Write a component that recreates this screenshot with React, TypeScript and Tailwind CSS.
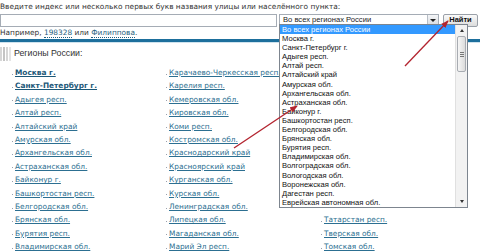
const col1 = [
  "Москва г.",
  "Санкт-Петербург г.",
  "Адыгея респ.",
  "Алтай респ.",
  "Алтайский край",
  "Амурская обл.",
  "Архангельская обл.",
  "Астраханская обл.",
  "Байконур г.",
  "Башкортостан респ.",
  "Белгородская обл.",
  "Брянская обл.",
  "Бурятия респ.",
  "Владимирская обл.",
];

const col2 = [
  "Карачаево-Черкесская респ.",
  "Карелия респ.",
  "Кемеровская обл.",
  "Кировская обл.",
  "Коми респ.",
  "Костромская обл.",
  "Краснодарский край",
  "Красноярский край",
  "Курганская обл.",
  "Курская обл.",
  "Ленинградская обл.",
  "Липецкая обл.",
  "Магаданская обл.",
  "Марий Эл респ.",
];

// rows above these are hidden under the open dropdown
const col3 = [
  "", "", "", "", "", "", "", "", "", "", "",
  "Татарстан респ.",
  "Тверская обл.",
  "Томская обл.",
];

const options = [
  "Во всех регионах России",
  "Москва г.",
  "Санкт-Петербург г.",
  "Адыгея респ.",
  "Алтай респ.",
  "Алтайский край",
  "Амурская обл.",
  "Архангельская обл.",
  "Астраханская обл.",
  "Байконур г.",
  "Башкортостан респ.",
  "Белгородская обл.",
  "Брянская обл.",
  "Бурятия респ.",
  "Владимирская обл.",
  "Волгоградская обл.",
  "Вологодская обл.",
  "Воронежская обл.",
  "Дагестан респ.",
  "Еврейская автономная обл.",
];

function RegionColumn({ items, bold = 0 }: { items: string[]; bold?: number }) {
  return (
    <ul className="flex flex-col">
      {items.map((name, i) => (
        <li key={i} className="flex items-center h-[13.4px] leading-[13.4px]">
          {name && (
            <>
              <span className="w-[1px] h-[1px] bg-gray-400 mr-[2px] mt-[3px]" />
              <a
                href="#"
                className={
                  "underline whitespace-nowrap " +
                  (i < bold ? "font-bold text-[#1c5878]" : "text-[#2c6f91]")
                }
              >
                {name}
              </a>
            </>
          )}
        </li>
      ))}
    </ul>
  );
}

export default function App() {
  return (
    <div className="relative w-[480px] h-[251px] overflow-hidden bg-white font-['DejaVu_Sans',sans-serif] text-[7.4px] text-[#333]">
      {/* search form */}
      <div className="pt-[1px]">
        <p className="h-[12px] leading-[12px] whitespace-nowrap">
          Введите индекс или несколько первых букв названия улицы или населённого пункта:
        </p>
        <div className="flex items-center h-[14px]">
          <div className="w-[277px] h-[13px] border border-[#a5acb5] bg-white" />
          <div className="ml-[2px] w-[160px] h-[12px] border border-[#a5acb5] bg-white flex items-center font-['Liberation_Sans',sans-serif] text-[7.6px]">
            <span className="flex-1 pl-[3px] text-[#222]">Во всех регионах России</span>
            <span className="w-[11px] h-[10px] border-l border-[#b8bec6] bg-gradient-to-b from-[#f4f5f7] to-[#d9dde2] flex items-center justify-center">
              <span className="w-0 h-0 border-l-[3px] border-r-[3px] border-t-[3px] border-l-transparent border-r-transparent border-t-[#222]" />
            </span>
          </div>
          <button className="ml-[4px] w-[35px] h-[13px] border border-[#9aa0a8] rounded-[2px] bg-gradient-to-b from-[#fafafa] to-[#dcdcdc] font-['Liberation_Sans',sans-serif] font-bold text-[7.5px] text-[#111] leading-none">
            Найти
          </button>
        </div>
        <p className="h-[10px] leading-[10px] mt-[1px] whitespace-nowrap">
          Например,{" "}
          <span className="text-[#1f5f80] border-b border-dotted border-[#1f5f80]">198328</span> или{" "}
          <span className="text-[#1f5f80] border-b border-dotted border-[#1f5f80]">Филиппова</span>.
        </p>
      </div>
      <div className="mt-[1px] h-[3px] bg-[#1d6f9c]" />
      <div className="h-[1px] bg-[#cfe3ee]" />

      {/* regions */}
      <div className="flex items-center h-[14px] mt-[4px]">
        <div className="flex gap-[1px] w-[12px] h-[14px]">
          <span className="w-[2px] h-full bg-[#d6d6d6]" />
          <span className="w-[2px] h-full bg-[#c4c4c4]" />
          <span className="w-[2px] h-full bg-[#d6d6d6]" />
          <span className="w-[2px] h-full bg-[#e4e4e4]" />
        </div>
        <h2 className="ml-[2px] font-['Liberation_Sans',sans-serif] text-[8.8px] text-[#333]">
          Регионы России:
        </h2>
      </div>
      <div className="grid grid-cols-[154px_155px_1fr] pl-[12px] mt-[5px] text-[7.4px]">
        <RegionColumn items={col1} bold={2} />
        <RegionColumn items={col2} />
        <RegionColumn items={col3} />
      </div>

      {/* open dropdown list */}
      <div className="absolute left-[279px] top-[24px] w-[189px] h-[184px] border border-[#7d858f] bg-white flex font-['Liberation_Sans',sans-serif] text-[7.6px] text-[#111]">
        <ul className="flex-1 flex flex-col">
          {options.map((o, i) => (
            <li
              key={o}
              className={
                "h-[9.1px] leading-[9.1px] pl-[2px] whitespace-nowrap " +
                (i === 0 ? "bg-[#3399ff] text-white" : "")
              }
            >
              {o}
            </li>
          ))}
        </ul>
        <div className="w-[12px] flex flex-col bg-[#f2f2f2] border-l border-[#e0e0e0]">
          <div className="h-[11px] flex items-center justify-center">
            <span className="w-0 h-0 border-l-[2.5px] border-r-[2.5px] border-b-[3px] border-l-transparent border-r-transparent border-b-[#333]" />
          </div>
          <div className="h-[36px] mx-[1px] border border-[#a8acb2] rounded-[2px] bg-gradient-to-r from-[#f6f6f6] to-[#dcdcdc] flex flex-col items-center justify-center gap-[1px]">
            <span className="w-[4px] h-[1px] bg-[#777]" />
            <span className="w-[4px] h-[1px] bg-[#777]" />
            <span className="w-[4px] h-[1px] bg-[#777]" />
          </div>
          <div className="flex-1" />
          <div className="h-[11px] flex items-center justify-center">
            <span className="w-0 h-0 border-l-[2.5px] border-r-[2.5px] border-t-[3px] border-l-transparent border-r-transparent border-t-[#333]" />
          </div>
        </div>
      </div>

      {/* red annotation arrows */}
      <svg className="absolute inset-0 pointer-events-none" width="480" height="251">
        <defs>
          <marker id="ah" markerWidth="8" markerHeight="6" refX="7" refY="3" orient="auto" markerUnits="userSpaceOnUse">
            <path d="M0,0 L8,3 L0,6 Z" fill="#b3242f" />
          </marker>
        </defs>
        <line x1="405" y1="66" x2="448" y2="21" stroke="#b3242f" strokeWidth="1.3" markerEnd="url(#ah)" />
        <line x1="234" y1="148" x2="297" y2="106" stroke="#b3242f" strokeWidth="1.3" markerEnd="url(#ah)" />
      </svg>
    </div>
  );
}
